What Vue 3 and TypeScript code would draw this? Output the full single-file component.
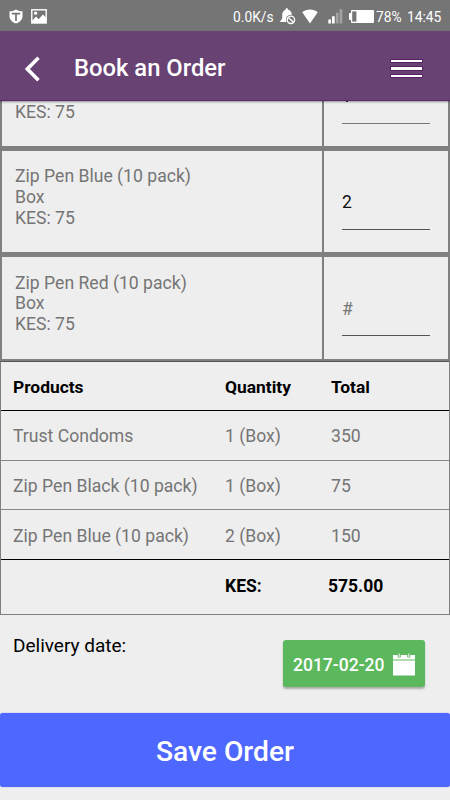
<script setup lang="ts">
import { ref } from 'vue'

interface StockItem {
  id: number
  name: string
  unit: string
  price: number
  quantity: string
}

interface OrderLine {
  name: string
  quantity: string
  total: number
}

const items = ref<StockItem[]>([
  { id: 2, name: 'Zip Pen Blue (10 pack)', unit: 'Box', price: 75, quantity: '2' },
  { id: 3, name: 'Zip Pen Red (10 pack)', unit: 'Box', price: 75, quantity: '' },
])

const lines: OrderLine[] = [
  { name: 'Trust Condoms', quantity: '1 (Box)', total: 350 },
  { name: 'Zip Pen Black (10 pack)', quantity: '1 (Box)', total: 75 },
  { name: 'Zip Pen Blue (10 pack)', quantity: '2 (Box)', total: 150 },
]

const grandTotal = lines.reduce((sum, line) => sum + line.total, 0).toFixed(2)
const deliveryDate = '2017-02-20'
</script>

<template>
  <div class="screen">
    <div class="status">
      <svg class="shield" viewBox="0 0 14 15" width="14" height="15">
        <path d="M7 0.4 C9 1.8 11 2.2 13.5 2.2 V7.2 C13.5 10.8 10.5 13.2 7 14.6 C3.5 13.2 .5 10.8 .5 7.2 V2.2 C3 2.2 5 1.8 7 .4Z" fill="#fff" />
        <path d="M2.8 4.7H11.2M7 4.7V12" fill="none" stroke="#757575" stroke-width="1.7" />
      </svg>
      <svg class="photo" viewBox="0 0 16 15" width="16" height="15">
        <rect x="0.8" y="0.8" width="14.4" height="13.2" fill="none" stroke="#fff" stroke-width="1.4" />
        <circle cx="4.6" cy="4.2" r="1.6" fill="#fff" />
        <path d="M1 12 L5 7.6 L7.7 10.3 L12 5.5 L15 8.5 V14 H1Z" fill="#fff" />
      </svg>
      <span class="speed">0.0K/s</span>
      <svg class="bell" viewBox="0 0 16 17" width="16" height="17">
        <path d="M6.8 0.3 C7.7 .3 8.2 1 8.2 1.8 C10.8 2.6 11.8 4.7 11.8 7.2 V10 L13.8 13 V14 H0.3 V13 L2.2 10.8 V7 C2.2 4.5 3.5 2.5 5.5 1.8 C5.5 1 6 .3 6.8 .3Z" fill="#fff" />
        <circle cx="10.9" cy="11.8" r="5" fill="#757575" />
        <circle cx="10.9" cy="11.8" r="3.7" fill="none" stroke="#fff" stroke-width="1.4" />
        <path d="M8.4 9.4 L13.4 14.2" stroke="#fff" stroke-width="1.4" />
      </svg>
      <svg class="wifi" viewBox="0 0 16 15" width="16" height="15">
        <path d="M0.3 3.2 C4.6 -.4 11.4 -.4 15.7 3.2 L8 14.4Z" fill="#fff" />
      </svg>
      <svg class="signal" viewBox="0 0 15 15" width="15" height="15">
        <path d="M0.3 10.5H3V14.5H.3Z M4 7.3H6.7V14.5H4Z" fill="#fff" />
        <path d="M7.9 3.8H10.5V14.5H7.9Z M11.6 0.3H14.3V14.5H11.6Z" fill="#a3a3a3" />
      </svg>
      <svg class="battery" viewBox="0 0 25 13" width="25" height="13">
        <rect x="2" y="0" width="23" height="13" rx="1" fill="#fff" />
        <rect x="0" y="3" width="3" height="7" rx="1" fill="#fff" />
        <rect x="3.2" y="1.4" width="4.2" height="10.2" fill="#757575" />
      </svg>
      <span class="percent">78%</span>
      <span class="clock">14:45</span>
    </div>

    <header class="bar">
      <svg class="back" viewBox="0 0 16 26" width="16" height="26">
        <path d="M13.5 1.8 L2.4 13 L13.5 24.2" fill="none" stroke="#fff" stroke-width="3.6" />
      </svg>
      <h1>Book an Order</h1>
      <div class="menu"><i /><i /><i /></div>
    </header>

    <main>
      <section class="viewport">
        <div class="stock">
          <div class="item partial">
            <div class="info">
              <div>KES: 75</div>
            </div>
            <div class="entry"><i class="tail" /></div>
          </div>
          <div v-for="item in items" :key="item.id" class="item">
            <div class="info">
              <div>{{ item.name }}</div>
              <div>{{ item.unit }}</div>
              <div>KES: {{ item.price }}</div>
            </div>
            <div class="entry">
              <input v-model="item.quantity" placeholder="#" />
            </div>
          </div>
        </div>
      </section>

      <section class="summary">
        <div class="line head">
          <span>Products</span><span>Quantity</span><span>Total</span>
        </div>
        <div v-for="line in lines" :key="line.name" class="line">
          <span>{{ line.name }}</span><span>{{ line.quantity }}</span><span>{{ line.total }}</span>
        </div>
        <div class="line sum">
          <span></span><span>KES:</span><span>{{ grandTotal }}</span>
        </div>
      </section>

      <section class="delivery">
        <label>Delivery date:</label>
        <button class="date">
          <span>{{ deliveryDate }}</span>
          <svg viewBox="0 0 22 23" width="22" height="23">
            <path d="M0 2H22V6.6H0Z M0 7.6H22V22.5H0Z" fill="#fff" />
            <path d="M6.2 0V4.6M15.8 0V4.6" stroke="#5cb85c" stroke-width="3" />
            <path d="M6.2 .6V4M15.8 .6V4" stroke="#fff" stroke-width="1" />
          </svg>
        </button>
      </section>

      <button class="save">Save Order</button>
    </main>
  </div>
</template>

<style>
body {
  background: #eee;
}
</style>

<style scoped>
* {
  box-sizing: border-box;
}
.screen {
  width: 450px;
  height: 800px;
  overflow: hidden;
  background: #eee;
  font-family: Roboto, sans-serif;
  color: #000;
}
.status {
  height: 31px;
  background: #757575;
  color: #fff;
  display: flex;
  align-items: center;
  font-size: 13.8px;
  padding: 1px 9px 0 9px;
}
.status svg {
  flex: none;
}
.status span {
  padding-top: 1px;
}
.photo {
  margin-left: 8px;
}
.speed {
  margin-left: auto;
  width: 40px;
  white-space: nowrap;
}
.bell {
  margin-left: 7px;
}
.wifi {
  margin-left: 6px;
}
.signal {
  margin-left: 10px;
}
.battery {
  margin-left: 6px;
}
.percent {
  margin-left: 2px;
  width: 25px;
}
.clock {
  margin-left: 6px;
  width: 34px;
}
.bar {
  height: 70px;
  background: #684272;
  border-bottom: 1px solid #5d2c68;
  display: flex;
  align-items: center;
  padding: 6px 28px 0 25px;
  color: #fff;
  position: relative;
  box-shadow: 0 1px 2px rgba(0, 0, 0, 0.4);
}
h1 {
  margin: -1px 0 0 33px;
  font-size: 23.8px;
  font-weight: 500;
  line-height: 30px;
}
.menu {
  margin-left: auto;
  width: 31px;
  display: flex;
  flex-direction: column;
  gap: 5px;
}
.menu i {
  height: 2.5px;
  background: #fff;
  box-shadow: 0 0 0 0.6px #4e075b;
}
.viewport {
  height: 260px;
  background: #808080;
}
.stock {
  display: flex;
  flex-direction: column;
  gap: 4.7px;
  padding: 0 2px 2px;
}
.item {
  display: grid;
  grid-template-columns: 320px 1fr;
  gap: 2px;
  height: 101.6px;
}
.info,
.entry {
  background: #eee;
}
.info {
  padding: 15.4px 13px;
  font-size: 17.6px;
  line-height: 20.7px;
  color: #757575;
}
.entry {
  padding: 25px 18px 0;
}
.entry input {
  display: block;
  width: 88px;
  height: 54px;
  border: 0;
  border-bottom: 1px solid #555;
  background: transparent;
  outline: none;
  padding: 0;
  font: 17.6px Roboto, sans-serif;
  color: #111;
}
.entry input::placeholder {
  color: #757575;
  opacity: 1;
}
.item.partial {
  height: 45.2px;
}
.partial .info {
  padding-top: 1px;
}
.partial .entry {
  padding-top: 0;
  display: flex;
  flex-direction: column;
}
.tail {
  width: 88px;
  height: 23px;
  border-bottom: 1px solid #777;
}
.tail::before {
  content: '';
  display: block;
  width: 2px;
  height: 1px;
  margin-left: 4px;
  background: #333;
}
.summary {
  border: 1px solid #808080;
  border-top-color: #555;
  height: 254px;
}
.line {
  display: grid;
  grid-template-columns: 212px 106px 1fr;
  align-items: center;
  height: 49.7px;
  padding: 2px 0 0 12px;
  border-bottom: 1px solid #888;
  font-size: 17.6px;
  color: #757575;
}
.line.head {
  height: 49px;
  border-color: #000;
  font-size: 17.4px;
  font-weight: 700;
  color: #000;
}
.line:nth-child(4) {
  border-color: #000;
}
.line.sum {
  height: 51px;
  padding-top: 0;
  border: 0;
  font-size: 17.5px;
  font-weight: 700;
  color: #000;
}
.line.sum span:last-child {
  margin-left: -3px;
}
.delivery {
  height: 98px;
  display: flex;
  justify-content: space-between;
  align-items: flex-start;
  padding: 20px 25px 0 13px;
}
.delivery label {
  font-size: 19px;
  line-height: 22px;
}
.date {
  margin-top: 5px;
  width: 142px;
  height: 47px;
  border: 0;
  border-radius: 3px;
  background: #5cb85c;
  box-shadow: 0 2px 2px rgba(0, 0, 0, 0.28);
  display: flex;
  align-items: center;
  justify-content: space-between;
  padding: 2px 10px 0;
  color: #fff;
  font: 500 17.5px Roboto, sans-serif;
}
.save {
  display: block;
  width: 450px;
  height: 74px;
  border: 0;
  border-radius: 3px;
  background: #4e68ff;
  box-shadow: 0 0 1px #4e68ff;
  color: #fff;
  font: 500 28.2px Roboto, sans-serif;
  padding: 3px 0 0;
}
</style>
